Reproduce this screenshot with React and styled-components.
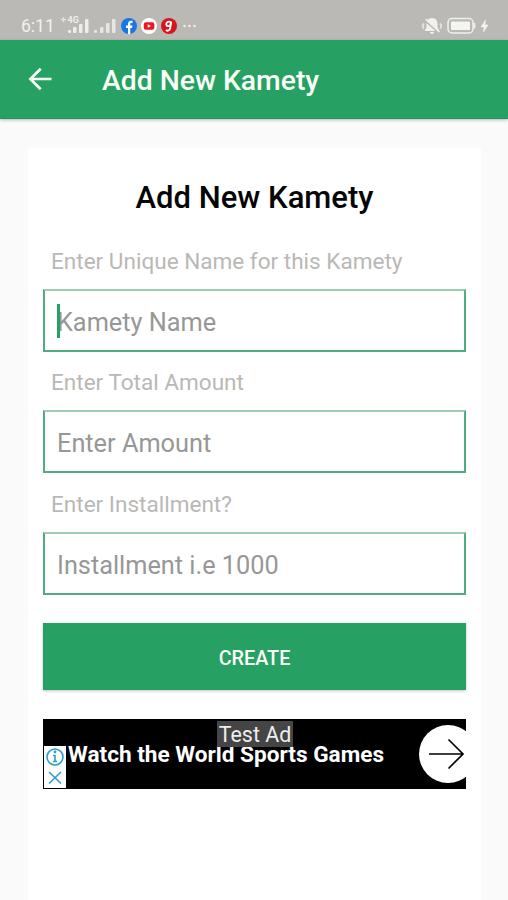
import React, { useState } from "react";
import styled, { createGlobalStyle } from "styled-components";

const GlobalStyle = createGlobalStyle`
  * {
    box-sizing: border-box;
  }
  body {
    margin: 0;
    background-color: #fafafa;
    font-family: Roboto, "Liberation Sans", sans-serif;
  }
`;
const Screen = styled.div`
  width: 508px;
  height: 900px;
  display: flex;
  flex-direction: column;
  overflow: hidden;
  background-color: #fafafa;
`;
const StatusBar = styled.div`
  flex: none;
  height: 40px;
  padding: 12px 19px 0 21px;
  display: flex;
  justify-content: space-between;
  background-color: #bab9b5;
  color: #f1f1ee;
`;
const StatusGroup = styled.div`
  height: 28px;
  display: flex;
  align-items: center;
`;
const Clock = styled.span`
  width: 40px;
  font-size: 17.5px;
`;
const StatusIcon = styled.svg`
  flex: none;
  display: block;
  width: ${(props) => props.$w}px;
  height: ${(props) => props.$h || 20}px;
  margin-left: ${(props) => props.$gap || 0}px;
`;
const AppBar = styled.header`
  flex: none;
  height: 79px;
  padding-left: 28px;
  display: flex;
  align-items: center;
  background-color: #27a163;
  border-bottom: 1px solid #1b995a;
  box-shadow: 0 1px 3px rgba(0, 0, 0, 0.28);
`;
const BackButton = styled.button`
  width: 24px;
  height: 24px;
  padding: 0;
  border: none;
  background: none;
  cursor: pointer;
`;
const BarTitle = styled.h1`
  margin: 3px 0 0 50px;
  font-size: 28.3px;
  font-weight: 500;
  line-height: 34px;
  color: #f9fff6;
`;
const Card = styled.main`
  flex: 1;
  margin: 29px 27px 0 28px;
  padding: 31px 15px 0;
  display: flex;
  flex-direction: column;
  background-color: white;
`;
const Title = styled.h2`
  margin: 0;
  font-size: 31px;
  font-weight: 500;
  line-height: 38px;
  text-align: center;
  color: #050505;
`;
const Form = styled.form`
  padding-top: 25px;
  display: flex;
  flex-direction: column;
`;
const Field = styled.div`
  height: 121.3px;
`;
const Label = styled.label`
  display: block;
  height: 47px;
  padding: 5px 0 0 8px;
  font-size: 22.55px;
  line-height: 30px;
  color: #b9b8b6;
`;
const InputBox = styled.div`
  position: relative;
  height: 63px;
  border: 2px solid #50ae7e;
  border-top-color: #9fccb5;
`;
const Input = styled.input`
  width: 100%;
  height: 100%;
  padding: 4px 12px 0;
  border: none;
  outline: none;
  background: none;
  font-family: inherit;
  font-size: 25.3px;
  color: #333;
  &::placeholder {
    color: #979797;
    opacity: 1;
  }
`;
const Caret = styled.span`
  position: absolute;
  left: 12px;
  top: 13px;
  width: 3px;
  height: 34px;
  background-color: #27a163;
`;
const Button = styled.button`
  height: 67px;
  margin-top: 17.5px;
  padding: 4px 0 0;
  border: none;
  background-color: #27a163;
  box-shadow: 0 1px 3px rgba(0, 0, 0, 0.25);
  font-family: inherit;
  font-size: 19.8px;
  font-weight: 500;
  color: #f9fff6;
  cursor: pointer;
`;
const Ad = styled.div`
  position: relative;
  height: 70px;
  margin-top: 28.7px;
  padding-left: 25px;
  display: flex;
  align-items: center;
  justify-content: space-between;
  overflow: hidden;
  background-color: black;
`;
const AdText = styled.span`
  padding-top: 1px;
  font-size: 22.6px;
  font-weight: 700;
  white-space: nowrap;
  color: white;
`;
const AdTag = styled.span`
  position: absolute;
  left: 174px;
  top: 2px;
  width: 76px;
  height: 26px;
  font-size: 21.4px;
  line-height: 27px;
  text-align: center;
  background-color: #454545;
  color: #eeeeee;
`;
const AdChoices = styled.div`
  position: absolute;
  left: 1px;
  bottom: 1px;
  width: 22px;
  height: 42px;
  background-color: white;
`;
const AdArrow = styled.div`
  flex: none;
  width: 58px;
  height: 58px;
  margin-right: -11px;
  border-radius: 50%;
  background-color: white;
`;

const fields = [
  { name: "name", label: "Enter Unique Name for this Kamety", placeholder: "Kamety Name" },
  { name: "amount", label: "Enter Total Amount", placeholder: "Enter Amount" },
  { name: "installment", label: "Enter Installment?", placeholder: "Installment i.e 1000" },
];

const Status = () => {
  return (
    <StatusBar>
      <StatusGroup>
        <Clock>6:11</Clock>
        <StatusIcon $w={28} viewBox="0 0 28 20" fill="#eeeeeb">
          <path d="M2.5 1v5M0 3.5h5" stroke="#e4e4e1" strokeWidth="1.3" />
          <text x="6.5" y="7" fontSize="9" fontWeight="700">4G</text>
          <rect x="7" y="14" width="3" height="3" rx="1" />
          <rect x="12" y="11" width="3.5" height="6" rx="1" />
          <rect x="18" y="8" width="3.5" height="9" rx="1" />
          <rect x="24" y="3" width="3.5" height="14" rx="1" />
        </StatusIcon>
        <StatusIcon $w={22} $gap={5} viewBox="0 0 22 20" fill="#e6e6e2">
          <rect x="0" y="14" width="3" height="3" rx="1" />
          <rect x="6" y="11" width="3.5" height="6" rx="1" />
          <rect x="12" y="7" width="3.5" height="10" rx="1" />
          <rect x="18" y="3" width="3.5" height="14" rx="1" />
        </StatusIcon>
        <StatusIcon $w={16} $h={16} $gap={5} viewBox="0 0 16 16">
          <circle cx="8" cy="8" r="8" fill="#1877e6" />
          <path d="M7 16v-6H5V7.5h2V6c0-2 1.2-3.2 3-3.2h1.5v2.3h-1c-.8 0-1.2.4-1.2 1.1v1.3h2.2L11 10H9.3v6z" fill="white" />
        </StatusIcon>
        <StatusIcon $w={16} $h={16} $gap={4} viewBox="0 0 16 16">
          <circle cx="8" cy="8" r="8" fill="white" />
          <rect x="2.8" y="4.2" width="10.5" height="7.6" rx="2" fill="#ee1620" />
          <path d="M6.7 6.2v3.6L10 8z" fill="white" />
        </StatusIcon>
        <StatusIcon $w={16} $h={16} $gap={4} viewBox="0 0 16 16">
          <circle cx="8" cy="8" r="8" fill="#d8141c" />
          <path d="M10 4.5C8 2.6 5 4 5.3 6.6c.3 2 2.8 2 4 .4L10.3 3.5 9.2 10c-.4 2.6-2.6 3.5-4.2 2" fill="none" stroke="white" strokeWidth="1.8" />
        </StatusIcon>
        <StatusIcon $w={14} $h={16} $gap={6} viewBox="0 0 14 16" fill="#efefec">
          <circle cx="1.5" cy="8" r="1.2" />
          <circle cx="6.5" cy="8" r="1.2" />
          <circle cx="11.5" cy="8" r="1.2" />
        </StatusIcon>
      </StatusGroup>
      <StatusGroup>
        <StatusIcon $w={22} viewBox="0 0 22 20" fill="#f1f1ee">
          <path d="M11 2c-4 0-5.5 2.8-5.5 6v3.5L4 14v1h14v-1l-1.5-2.5V8c0-3.2-1.5-6-5.5-6zM9 16h4c0 2.5-4 2.5-4 0z" />
          <path d="M3 7.5Q.5 10 3 12.5M19 7.5Q21.5 10 19 12.5" fill="none" stroke="#e4e4e1" strokeWidth="1.8" />
          <path d="M4.5 4.5l14 12.5" stroke="#bab9b5" strokeWidth="2.4" />
          <path d="M4.5 3l14 13" stroke="#f1f1ee" strokeWidth="1.6" />
        </StatusIcon>
        <StatusIcon $w={29} $h={18} $gap={4} viewBox="0 0 29 18">
          <rect x="1" y="1.5" width="25" height="14.5" rx="4" fill="none" stroke="#f0f0ed" strokeWidth="1.5" />
          <rect x="4" y="4.5" width="19" height="8.5" rx="1" fill="#f4f4f1" />
          <path d="M27.3 6v5.5" stroke="#f0f0ed" strokeWidth="2" />
        </StatusIcon>
        <StatusIcon $w={9} $h={14} $gap={4} viewBox="0 0 8 14">
          <path d="M5 1L.5 8h3L3 13l4.500-7h-3z" fill="#f1f1ee" stroke="#f1f1ee" strokeWidth="0.6" />
        </StatusIcon>
      </StatusGroup>
    </StatusBar>
  );
};

const App = () => {
  const [values, setValues] = useState({
    name: "",
    amount: "",
    installment: "",
  });

  function handle(e) {
    setValues({ ...values, [e.target.name]: e.target.value });
  }

  return (
    <Screen>
      <GlobalStyle />
      <Status />
      <AppBar>
        <BackButton aria-label="Back">
          <svg width="24" height="24" viewBox="0 0 24 24" fill="none" stroke="#f9fff6" strokeWidth="2.7">
            <path d="M23.5 12H3M12.7 1.7L2.4 12l10.3 10.3" />
          </svg>
        </BackButton>
        <BarTitle>Add New Kamety</BarTitle>
      </AppBar>
      <Card>
        <Title>Add New Kamety</Title>
        <Form onSubmit={(e) => e.preventDefault()}>
          {fields.map((field, i) => (
            <Field key={field.name}>
              <Label htmlFor={field.name}>{field.label}</Label>
              <InputBox>
                <Input
                  id={field.name}
                  name={field.name}
                  placeholder={field.placeholder}
                  value={values[field.name]}
                  onChange={(e) => handle(e)}
                />
                {i === 0 && !values.name && <Caret />}
              </InputBox>
            </Field>
          ))}
          <Button type="submit">CREATE</Button>
        </Form>
        <Ad>
          <AdText>Watch the World Sports Games</AdText>
          <AdArrow>
            <svg width="58" height="58" viewBox="0 0 58 58" fill="none" stroke="black" strokeWidth="1.7">
              <path d="M10 29h33M29.5 14.5L44 29 29.5 43.5" />
            </svg>
          </AdArrow>
          <AdTag>Test Ad</AdTag>
          <AdChoices>
            <svg width="22" height="42" viewBox="0 0 22 42" fill="none" stroke="#2b9fc9" strokeWidth="1.6">
              <circle cx="11" cy="11" r="8" />
              <path d="M11 9v6.5M9 9.5h2M9 15.5h4M5 26l12 11.5M17 26L5 37.5" />
              <circle cx="11" cy="6" r="0.6" />
            </svg>
          </AdChoices>
        </Ad>
      </Card>
    </Screen>
  );
};

export default App;
